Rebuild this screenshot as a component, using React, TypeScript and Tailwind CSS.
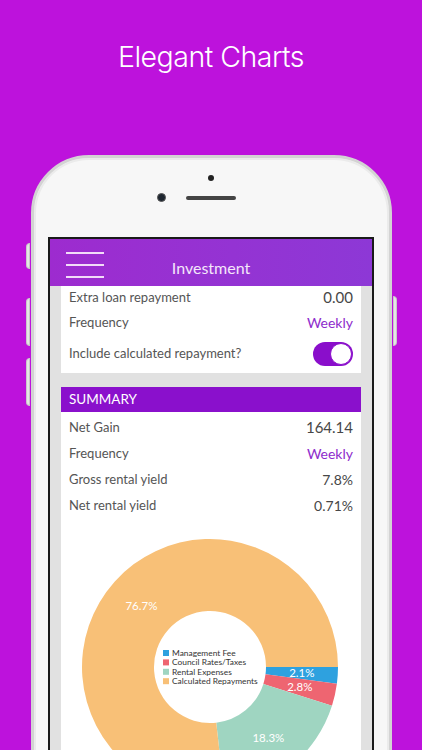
import React from 'react';

const slices = [
  { label: 'Management Fee', value: 2.1, color: '#2ea1df' },
  { label: 'Council Rates/Taxes', value: 2.8, color: '#ee6571' },
  { label: 'Rental Expenses', value: 18.3, color: '#9fd5c1' },
  { label: 'Calculated Repayments', value: 76.7, color: '#f8c077' },
];

const font = { fontFamily: 'Lato, "Noto Sans", sans-serif' };

function Donut() {
  const cx = 149;
  const cy = 148;
  const R = 128;
  const r = 56;
  const total = slices.reduce((s, x) => s + x.value, 0);
  let start = 0;
  const pt = (rad: number, a: number) => [cx + rad * Math.cos(a), cy + rad * Math.sin(a)];

  const arcs = slices.map((s) => {
    const a0 = start;
    const a1 = start + (s.value / total) * Math.PI * 2;
    start = a1;
    const large = a1 - a0 > Math.PI ? 1 : 0;
    const [x0, y0] = pt(R, a0);
    const [x1, y1] = pt(R, a1);
    const [x2, y2] = pt(r, a1);
    const [x3, y3] = pt(r, a0);
    const d = `M${x0} ${y0} A${R} ${R} 0 ${large} 1 ${x1} ${y1} L${x2} ${y2} A${r} ${r} 0 ${large} 0 ${x3} ${y3} Z`;
    const mid = (a0 + a1) / 2;
    const [lx, ly] = pt(92, mid);
    return { d, lx, ly, s };
  });

  return (
    <svg width="300" height="240" viewBox="0 0 300 240" style={font}>
      {arcs.map((a, i) => (
        <path key={i} d={a.d} fill={a.s.color} />
      ))}
      {arcs.map((a, i) => (
        <text
          key={'t' + i}
          x={a.lx}
          y={a.ly + 4}
          textAnchor="middle"
          fontSize="11.5"
          fill="#ffffff"
        >
          {a.s.value}%
        </text>
      ))}
      {slices.map((s, i) => (
        <g key={'l' + i}>
          <rect x={102} y={131 + i * 9.4} width={6} height={6} fill={s.color} />
          <text x={111} y={136.8 + i * 9.4} fontSize="8.4" fill="#333">
            {s.label}
          </text>
        </g>
      ))}
    </svg>
  );
}

function Row({ label, value, tall, purple, big }: { label: string; value?: string; tall?: string; purple?: boolean; big?: boolean }) {
  return (
    <div className={`flex items-center justify-between px-[8px] ${tall ?? 'h-[26px]'}`}>
      <span className="text-[13px] text-[#555]">{label}</span>
      {value && (
        <span className={`${big ? 'text-[15px]' : 'text-[14px]'} ${purple ? 'text-[#8e2ccc]' : 'text-[#474747]'}`}>{value}</span>
      )}
    </div>
  );
}

export default function App() {
  return (
    <div className="w-full h-[750px] overflow-hidden bg-[#bd12dc] flex flex-col items-center" style={font}>
      <h1
        className="mt-[43px] text-[28.5px] leading-none font-light text-white tracking-[-0.5px]"
        style={{ fontFamily: 'Inter, sans-serif' }}
      >
        Elegant Charts
      </h1>

      {/* phone body */}
      <div className="relative mt-[83px] w-[361px] h-[640px] shrink-0 rounded-t-[58px] bg-[#f7f7f7] border-[3px] border-[#d3d3d3] shadow-[inset_0_0_0_2px_#ebebeb]">
        {/* side buttons */}
        <div className="absolute left-[-8px] top-[85px] w-[4px] h-[26px] rounded-l-sm bg-[#e6e6e6] border border-[#c9c9c9]" />
        <div className="absolute left-[-8px] top-[140px] w-[4px] h-[48px] rounded-l-sm bg-[#e6e6e6] border border-[#c9c9c9]" />
        <div className="absolute left-[-8px] top-[200px] w-[4px] h-[48px] rounded-l-sm bg-[#e6e6e6] border border-[#c9c9c9]" />
        <div className="absolute right-[-8px] top-[138px] w-[4px] h-[50px] rounded-r-sm bg-[#e6e6e6] border border-[#c9c9c9]" />

        <div className="flex flex-col items-center">
          <div className="mt-[17px] w-[6px] h-[6px] rounded-full bg-[#222]" />
          <div className="mt-[13px] flex items-center h-[8px]">
            <div className="w-[9px] h-[9px] rounded-full bg-[#1e2630] border border-[#555]" />
            <div className="ml-[20px] w-[50px] h-[4px] rounded-full bg-[#444]" />
            <div className="w-[29px]" />
          </div>
        </div>

        {/* screen */}
        <div className="mt-[35px] mx-auto w-[326px] h-[560px] border-2 border-[#1a1a1a] bg-[#e1e1e1] overflow-hidden">
          <div className="h-[47px] grid grid-cols-[1fr_auto_1fr] items-start bg-gradient-to-r from-[#9d2bcf] to-[#8d38d6]">
            <div className="mt-[13px] pl-[16px] flex flex-col gap-[10px]">
              <div className="w-[38px] h-[2px] bg-[#f2dcf8]" />
              <div className="w-[38px] h-[2px] bg-[#f2dcf8]" />
              <div className="w-[38px] h-[2px] bg-[#f2dcf8]" />
            </div>
            <div className="mt-[19px] text-[16px] leading-[20px] text-[#f4e6fa]">Investment</div>
            <div />
          </div>

          <div className="px-[11px]">
            <div className="bg-white">
              <Row label="Extra loan repayment" value="0.00" tall="h-[24px]" big />
              <Row label="Frequency" value="Weekly" purple />
              <div className="flex items-center justify-between px-[8px] h-[37px]">
                <span className="text-[13px] text-[#555]">Include calculated repayment?</span>
                <div className="w-[40px] h-[24px] rounded-full bg-[#8a0ecb] flex items-center justify-end pr-[1px]">
                  <div className="w-[22px] h-[22px] rounded-full bg-white border border-[#8a0ecb]" />
                </div>
              </div>
            </div>

            <div className="mt-[14px] bg-white">
              <div className="h-[25px] bg-[#8a10cc] flex items-center px-[8px] text-[13.5px] text-white">SUMMARY</div>
              <div className="pt-[3px]">
                <Row label="Net Gain" value="164.14" big />
                <Row label="Frequency" value="Weekly" purple />
                <Row label="Gross rental yield" value="7.8%" />
                <Row label="Net rental yield" value="0.71%" />
              </div>
              <Donut />
            </div>
          </div>
        </div>
      </div>
    </div>
  );
}
